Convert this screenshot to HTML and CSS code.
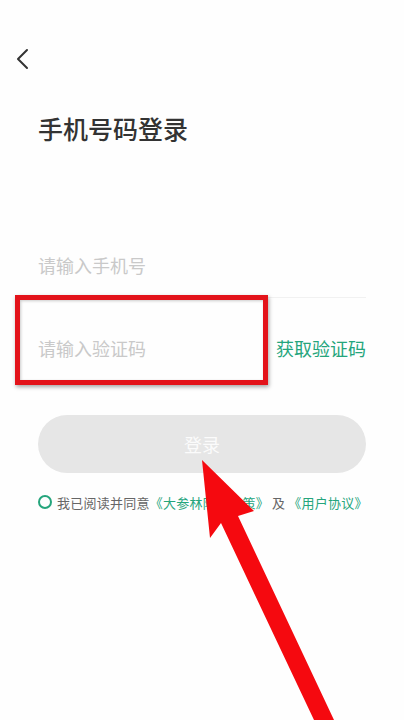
FILE: index.html
```html
<!DOCTYPE html>
<html lang="zh-CN">
<head>
<meta charset="utf-8">
<title>手机号码登录</title>
<link rel="stylesheet" href="styles.css">
</head>
<body>
<div class="page">
  <div class="nav">
    <svg class="back" width="14" height="22" viewBox="0 0 14 22"><path d="M12 2 L3 11 L12 20" fill="none" stroke="#333" stroke-width="2" stroke-linecap="round" stroke-linejoin="round"/></svg>
  </div>
  <h1 class="title">手机号码登录</h1>
  <div class="form">
    <div class="field field-phone">
      <span class="placeholder">请输入手机号</span>
    </div>
    <div class="field field-code">
      <span class="placeholder">请输入验证码</span>
      <span class="get-code">获取验证码</span>
    </div>
    <div class="btn">登录</div>
    <div class="agree">
      <span class="check"></span>
      <span class="agree-text">我已阅读并同意<span class="link">《大参林隐私政策》</span><span class="and">及</span><span class="link">《用户协议》</span></span>
    </div>
  </div>
  <div class="highlight"></div>
  <svg class="arrow" width="404" height="720" viewBox="0 0 404 720"><polygon points="202,460 254,511 238,516 334,720 314,720 221,523 210,538" fill="#f5090f"/></svg>
</div>
</body>
</html>
```
FILE: styles.css
```css
html, body {
  margin: 0;
  padding: 0;
  background: #fff;
}
.page {
  position: relative;
  width: 404px;
  height: 720px;
  overflow: hidden;
  font-family: "Noto Sans CJK SC", "Noto Sans", sans-serif;
  background: #fefefe;
}
.nav {
  padding-top: 48px;
  height: 24px;
  padding-left: 15px;
}
.back {
  display: block;
}
.title {
  margin: 40px 0 0 38px;
  font-size: 25px;
  line-height: 32px;
  font-weight: 500;
  color: #333;
}
.form {
  padding: 0 38px;
}
.field {
  display: flex;
  align-items: center;
  justify-content: space-between;
  height: 50px;
}
.field-phone {
  margin-top: 96px;
  padding-bottom: 7px;
  border-bottom: 1px solid #f1f1f1;
}
.field-code {
  margin-top: 25px;
}
.placeholder {
  font-size: 18px;
  color: #c9c9c9;
}
.get-code {
  font-size: 18px;
  color: #25a57c;
}
.btn {
  margin-top: 42px;
  height: 58px;
  border-radius: 29px;
  background: #e6e6e6;
  color: #fbfbfb;
  font-size: 18px;
  display: flex;
  align-items: center;
  justify-content: center;
}
.agree {
  margin-top: 19px;
  height: 20px;
  display: flex;
  align-items: center;
}
.check {
  width: 10px;
  height: 10px;
  border: 2px solid #25a57c;
  border-radius: 50%;
  margin-right: 5px;
  flex: none;
}
.agree-text {
  font-size: 13px;
  color: #666;
  white-space: nowrap;
  letter-spacing: 0.25px;
}
.link {
  color: #25a57c;
}
.and {
  margin: 0 3px;
}
.highlight {
  position: absolute;
  left: 15px;
  top: 295px;
  width: 243px;
  height: 80px;
  border: 5px solid #e3131a;
  box-shadow: 1px 2px 4px rgba(0,0,0,0.35), inset 1px 1px 3px rgba(0,0,0,0.2);
}
.arrow {
  position: absolute;
  left: 0;
  top: 0;
}
```
